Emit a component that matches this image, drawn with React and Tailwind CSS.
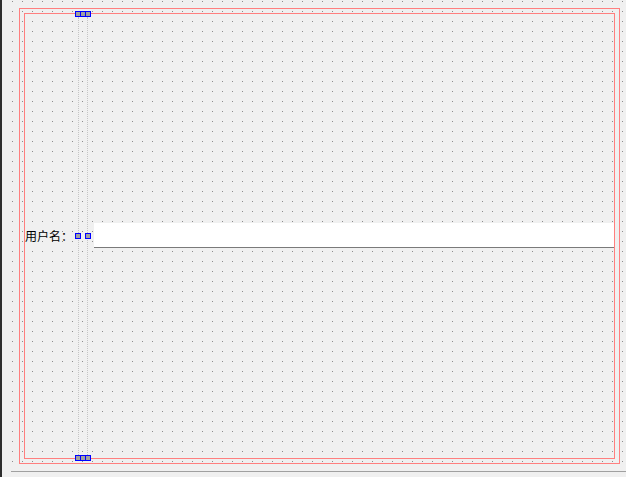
import React from 'react';

function Handle({ cells = 1, className = '' }) {
  return (
    <div className={`flex gap-px p-px bg-[#0000ff] ${className}`}>
      {Array.from({ length: cells }).map((_, i) => (
        <div key={i} className="w-[4px] h-[4px] bg-[#a0a0a0]" />
      ))}
    </div>
  );
}

export default function App() {
  return (
    <div className="flex w-[626px] h-[477px] bg-[#f0f0f0] overflow-hidden font-['Noto_Sans_CJK_SC',sans-serif]">
      <div className="w-[2px] h-full bg-[#2e2e2e]" />

      {/* form canvas */}
      <div className="relative ml-[9px] w-[615px] h-[472px] border-b border-[#a0a0a0]">
        <svg className="absolute inset-0" width="615" height="471">
          <defs>
            <pattern id="grid" width="10" height="10" patternUnits="userSpaceOnUse">
              <rect x="1" y="1" width="1" height="1" fill="#8c8c8c" />
            </pattern>
          </defs>
          <rect width="615" height="471" fill="url(#grid)" />
        </svg>

        <div className="relative mt-[8px] ml-[8px] w-[601px] h-[456px] border border-[#ff7f7f] p-[4px]">
          <div className="relative w-[591px] h-[446px] border border-[#ff7f7f] flex flex-col pt-[209px]">
            {/* spacer guides */}
            <div className="absolute left-[53px] top-[3px] h-[438px] border-l border-dotted border-[#c4c4c4]" />
            <div className="absolute left-[62px] top-[3px] h-[438px] border-l border-dotted border-[#c4c4c4]" />
            <Handle cells={3} className="absolute left-[50px] top-[-3px]" />
            <Handle cells={3} className="absolute left-[50px] top-[441px]" />

            <div className="relative flex items-start h-[25px]">
              <span className="w-[50px] text-[12px] leading-[25px] text-black">用户名：</span>
              <Handle className="mt-[10px]" />
              <Handle className="mt-[10px] ml-[4px]" />
              <div className="ml-[3px] flex-1 h-[25px] bg-white border-b border-[#7a7a7a]" />
            </div>
          </div>
        </div>
      </div>
    </div>
  );
}
